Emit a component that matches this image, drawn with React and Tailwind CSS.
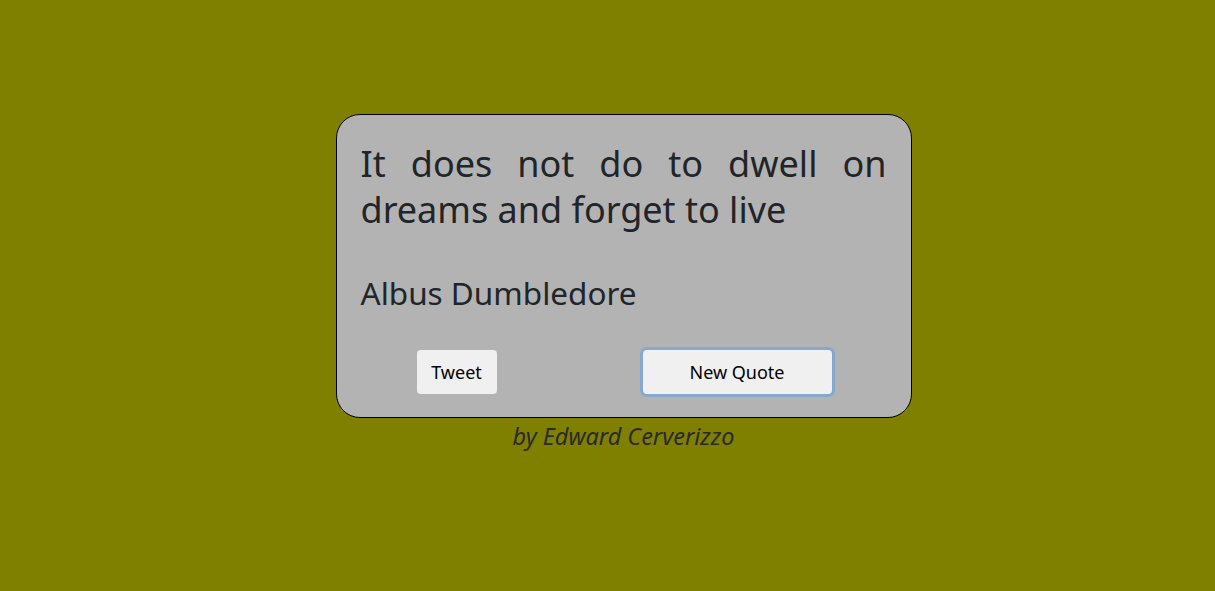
import React from "react"

function App() {
	const quote = "It does not do to dwell on dreams and forget to live"
	const author = "Albus Dumbledore"

	return (
		<div
			className="min-h-screen w-full bg-[#7f7f00] pt-[114px] pl-[32px] flex flex-col items-center text-[#212529]"
			style={{ fontFamily: "'Noto Sans', 'Open Sans', sans-serif" }}
		>
			<div className="w-[576px] h-[304px] bg-[#b3b3b3] border border-black rounded-[24px] px-[24px] pt-[26px]">
				<p className="text-[36px] leading-[46px] text-justify">{quote}</p>
				<p className="text-[31.5px] leading-[40px] mt-[40px]">{author}</p>

				<div className="flex items-center mt-[37px]">
					<button className="ml-[56px] w-[80px] h-[44px] bg-[#f0f0f0] rounded-[4px] text-[18px] text-black">
						Tweet
					</button>
					<button className="ml-[146px] w-[189px] h-[44px] bg-[#f0f0f0] rounded-[4px] text-[18px] text-black ring-[3px] ring-[#86a8cc]">
						New Quote
					</button>
				</div>
			</div>
			<p className="text-[23.5px] leading-[32px] italic text-[#2b2b2b] mt-[2px]">by Edward Cerverizzo</p>
		</div>
	)
}

export default App
